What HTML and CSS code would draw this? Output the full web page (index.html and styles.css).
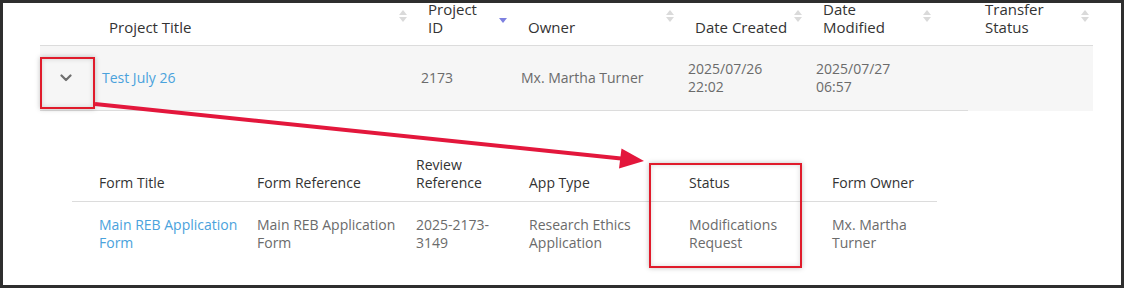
FILE: index.html
```html
<!DOCTYPE html>
<html lang="en">
<head>
    <meta charset="UTF-8">
    <meta name="viewport" content="width=device-width, initial-scale=1.0">
    <title>Projects</title>
    <link rel="stylesheet" href="styles.css">
</head>
<body>
    <div class="frame">
        <table class="projects">
            <colgroup>
                <col style="width: 52px">
                <col style="width: 319px">
                <col style="width: 100px">
                <col style="width: 167px">
                <col style="width: 128px">
                <col style="width: 129px">
                <col style="width: 33px">
                <col style="width: 125px">
            </colgroup>
            <thead>
                <tr>
                    <th></th>
                    <th class="sortable">Project Title <span class="sort-icon both"></span></th>
                    <th class="sortable">Project ID <span class="sort-icon desc"></span></th>
                    <th class="sortable">Owner <span class="sort-icon both"></span></th>
                    <th class="sortable">Date Created <span class="sort-icon both"></span></th>
                    <th class="sortable">Date Modified <span class="sort-icon both"></span></th>
                    <th class="sortable transfer" colspan="2">Transfer Status <span class="sort-icon both"></span></th>
                </tr>
            </thead>
            <tbody>
                <tr class="shown">
                    <td class="expander">
                        <svg width="12" height="8" viewBox="0 0 12 8"><path d="M1.5 1.5 L6 6 L10.5 1.5" fill="none" stroke="#6f6f6f" stroke-width="2.2" stroke-linecap="round" stroke-linejoin="round"/></svg>
                    </td>
                    <td><a href="#">Test July 26</a></td>
                    <td>2173</td>
                    <td>Mx. Martha Turner</td>
                    <td>2025/07/26 22:02</td>
                    <td>2025/07/27 06:57</td>
                    <td class="gap"></td>
                    <td class="empty"></td>
                </tr>
            </tbody>
        </table>

        <table class="forms">
            <colgroup>
                <col style="width: 17px">
                <col style="width: 158px">
                <col style="width: 159px">
                <col style="width: 113px">
                <col style="width: 160px">
                <col style="width: 143px">
                <col style="width: 115px">
            </colgroup>
            <thead>
                <tr>
                    <th></th>
                    <th>Form Title</th>
                    <th>Form Reference</th>
                    <th>Review Reference</th>
                    <th>App Type</th>
                    <th>Status</th>
                    <th>Form Owner</th>
                </tr>
            </thead>
            <tbody>
                <tr>
                    <td></td>
                    <td><a href="#">Main REB Application Form</a></td>
                    <td>Main REB Application Form</td>
                    <td>2025-2173-3149</td>
                    <td>Research Ethics Application</td>
                    <td>Modifications Request</td>
                    <td>Mx. Martha Turner</td>
                </tr>
            </tbody>
        </table>

        <!-- annotation marks -->
        <div class="mark mark-toggle"></div>
        <div class="mark mark-status"></div>
        <svg class="pointer" width="1124" height="288" viewBox="0 0 1124 288">
            <line x1="95" y1="104" x2="621" y2="158.5" stroke="#e3173c" stroke-width="4"/>
            <polygon points="644,161 619,168.5 621.5,148.5" fill="#e3173c"/>
        </svg>
    </div>
</body>
</html>
```

FILE: styles.css
```css
body {
    margin: 0;
    font-family: "Open Sans", "Liberation Sans", sans-serif;
    background-color: white;
}
.frame {
    position: relative;
    width: 1124px;
    height: 288px;
    box-sizing: border-box;
    border: 3px solid #2e2e2e;
    overflow: hidden;
}
table {
    border-collapse: collapse;
    table-layout: fixed;
}
a {
    color: #4aa2dc;
    text-decoration: none;
}

/* projects table */
.projects {
    width: 1053px;
    margin: -16px 0 0 37px;
}
.projects th {
    position: relative;
    padding: 13px 16px 9px 17px;
    font-size: 15px;
    line-height: 18px;
    font-weight: normal;
    color: #333;
    text-align: left;
    vertical-align: bottom;
    border-bottom: 1px solid #dcdcdc;
}
.projects th.transfer {
    padding-left: 50px;
}
.projects td {
    padding: 14px 14px 14px 10px;
    font-size: 14px;
    line-height: 18px;
    color: #6b6b6b;
    vertical-align: middle;
    background-color: #f6f6f6;
    border-bottom: 1px solid #dcdcdc;
}
.projects td.expander {
    padding: 14px 0;
    text-align: center;
}
.projects td.expander svg {
    display: block;
    margin: 0 auto;
}
.projects td.empty {
    border-bottom-color: #f6f6f6;
}
.sort-icon {
    position: absolute;
    right: 4px;
    top: 50%;
    width: 8px;
    height: 12px;
    margin-top: -6px;
}
.sort-icon.both::before,
.sort-icon.both::after,
.sort-icon.desc::after {
    content: "";
    position: absolute;
    left: 0;
    border-left: 4px solid transparent;
    border-right: 4px solid transparent;
}
.sort-icon.both::before {
    top: 0;
    border-bottom: 5px solid #dadada;
}
.sort-icon.both::after {
    bottom: 0;
    border-top: 5px solid #dadada;
}
.sort-icon.desc::after {
    bottom: -1px;
    border-top: 5px solid #7d80e0;
}

/* forms table */
.forms {
    width: 865px;
    margin: 37px 0 0 69px;
}
.forms th {
    padding: 8px 8px 9px 10px;
    font-size: 14px;
    line-height: 18px;
    font-weight: normal;
    color: #333;
    text-align: left;
    vertical-align: bottom;
    border-bottom: 1px solid #dcdcdc;
}
.forms td {
    padding: 14px 8px 14px 10px;
    font-size: 14px;
    line-height: 18px;
    color: #6b6b6b;
    vertical-align: top;
}

/* annotations */
.mark {
    position: absolute;
    border: 2px solid #e01b2b;
    box-shadow: 0 0 5px rgba(0,0,0,0.25), inset 0 0 5px rgba(0,0,0,0.15);
}
.mark-toggle {
    left: 37px;
    top: 54px;
    width: 51px;
    height: 48px;
}
.mark-status {
    left: 646px;
    top: 160px;
    width: 149px;
    height: 101px;
}
.pointer {
    position: absolute;
    left: -3px;
    top: -3px;
    pointer-events: none;
}
```
